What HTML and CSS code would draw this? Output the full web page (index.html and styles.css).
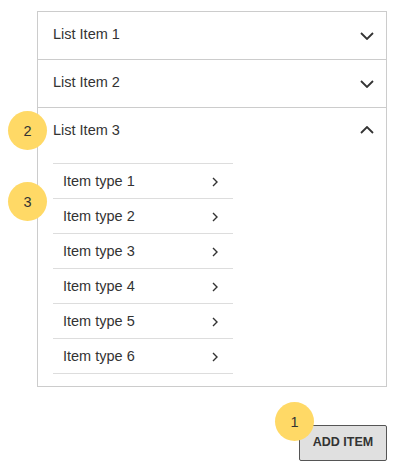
FILE: index.html
```html
<!DOCTYPE html>
<html lang="en">
  <head>
    <meta charset="UTF-8" />
    <title>List Items</title>
    <link rel="stylesheet" href="styles.css">
  </head>
  <body>
    <div class="page">
      <div class="accordion">
        <div class="acc-item">
          <div class="acc-head">
            <span class="acc-title">List Item 1</span>
            <svg class="chev" width="14" height="8" viewBox="0 0 14 8"><path d="M1 1l6 6 6-6" /></svg>
          </div>
        </div>
        <div class="acc-item">
          <div class="acc-head">
            <span class="acc-title">List Item 2</span>
            <svg class="chev" width="14" height="8" viewBox="0 0 14 8"><path d="M1 1l6 6 6-6" /></svg>
          </div>
        </div>
        <div class="acc-item open">
          <div class="acc-head">
            <span class="acc-title">List Item 3</span>
            <svg class="chev" width="14" height="8" viewBox="0 0 14 8"><path d="M1 7l6-6 6 6" /></svg>
            <span class="badge badge-2">2</span>
          </div>
          <ul class="sub-list">
            <li>Item type 1 <svg class="arrow" width="6" height="10" viewBox="0 0 6 10"><path d="M1 1l4 4-4 4" /></svg><span class="badge badge-3">3</span></li>
            <li>Item type 2 <svg class="arrow" width="6" height="10" viewBox="0 0 6 10"><path d="M1 1l4 4-4 4" /></svg></li>
            <li>Item type 3 <svg class="arrow" width="6" height="10" viewBox="0 0 6 10"><path d="M1 1l4 4-4 4" /></svg></li>
            <li>Item type 4 <svg class="arrow" width="6" height="10" viewBox="0 0 6 10"><path d="M1 1l4 4-4 4" /></svg></li>
            <li>Item type 5 <svg class="arrow" width="6" height="10" viewBox="0 0 6 10"><path d="M1 1l4 4-4 4" /></svg></li>
            <li>Item type 6 <svg class="arrow" width="6" height="10" viewBox="0 0 6 10"><path d="M1 1l4 4-4 4" /></svg></li>
          </ul>
        </div>
      </div>
      <div class="actions">
        <button class="add-btn">ADD ITEM<span class="badge badge-1">1</span></button>
      </div>
    </div>
  </body>
</html>
```

FILE: styles.css
```css
body {
  margin: 0;
  font-family: "Liberation Sans", Arial, sans-serif;
  color: #333;
  background: #fff;
}
.page {
  padding: 11px 10px 0 37px;
}
.accordion {
  width: 350px;
  box-sizing: border-box;
  border: 1px solid #ccc;
}
.acc-item + .acc-item {
  border-top: 1px solid #ccc;
}
.acc-head {
  position: relative;
  display: flex;
  align-items: center;
  justify-content: space-between;
  height: 47px;
  padding: 0 12px 0 15px;
  font-size: 14.5px;
}
.acc-title {
  margin-top: -4px;
}
.acc-item.open .acc-head {
  height: 44px;
}
.acc-item.open .acc-title {
  margin-top: 0;
}
.chev {
  fill: none;
  stroke: #333;
  stroke-width: 1.8;
}
.sub-list {
  list-style: none;
  margin: 11px 0 12px 15px;
  padding: 0;
  width: 180px;
  border-top: 1px solid #ddd;
}
.sub-list li {
  position: relative;
  display: flex;
  align-items: center;
  justify-content: space-between;
  height: 34px;
  padding: 0 15px 0 10px;
  border-bottom: 1px solid #ddd;
  font-size: 14.5px;
}
.arrow {
  fill: none;
  stroke: #333;
  stroke-width: 1.4;
  margin-top: 2px;
}
.actions {
  display: flex;
  justify-content: flex-end;
  width: 350px;
  margin-top: 38px;
}
.add-btn {
  position: relative;
  width: 88px;
  height: 36px;
  background: #e0e0e0;
  border: 1px solid #555;
  border-radius: 2px;
  font-family: "Liberation Sans", Arial, sans-serif;
  font-size: 12.5px;
  font-weight: 700;
  color: #333;
  padding: 0 0 3px 0;
}
.badge {
  position: absolute;
  width: 39px;
  height: 39px;
  border-radius: 50%;
  background: #ffd966;
  color: #333;
  font-size: 14.5px;
  font-weight: 400;
  display: flex;
  align-items: center;
  justify-content: center;
}
.badge-2 {
  left: -30px;
  top: 3px;
}
.badge-3 {
  left: -45px;
  top: 18px;
}
.badge-1 {
  left: -25px;
  top: -24px;
}
```
